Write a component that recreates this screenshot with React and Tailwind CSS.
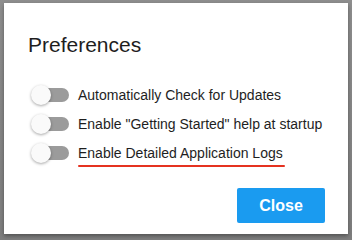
import React from "react";

function Toggle() {
  return (
    <div className="relative w-[40px] h-[20px] flex items-center shrink-0">
      <div className="ml-[6px] w-[32px] h-[14px] rounded-full bg-[#9b9b9b]" />
      <div className="absolute left-0 top-0 w-[20px] h-[20px] rounded-full bg-[#fafafa] shadow-[0_1px_3px_rgba(0,0,0,0.35)]" />
    </div>
  );
}

export default function App() {
  const rows = [
    "Automatically Check for Updates",
    'Enable "Getting Started" help at startup',
    "Enable Detailed Application Logs",
  ];
  return (
    <div className="w-[352px] h-[240px] bg-gradient-to-b from-[#8e8e8e] to-[#7e7e7e] pt-[3px] pl-[4px] font-['Liberation_Sans',Arial,sans-serif]">
      <div className="w-[344px] h-[231px] bg-white shadow-[0_2px_4px_rgba(0,0,0,0.35)] flex flex-col pl-[24px] pr-[23px]">
        <div className="mt-[30px] text-[21px] leading-[24px] text-[#1e1e1e]">Preferences</div>
        <div className="mt-[28px] flex flex-col gap-[9px] pl-[3px]">
          {rows.map((r, i) => (
            <div key={i} className="flex items-center gap-[7px] h-[20px]">
              <Toggle />
              <div className="relative text-[14px] leading-[20px] text-[#1e1e1e] whitespace-nowrap">
                {r}
                {i === 2 && (
                  <div className="absolute left-[0px] right-[-2px] bottom-[-4px] h-[2px] rounded-full bg-[#e53220]" />
                )}
              </div>
            </div>
          ))}
        </div>
        <div className="mt-[25px] flex justify-end">
          <button className="w-[88px] h-[35px] rounded-[2px] bg-[#1a9bf0] text-white font-bold text-[16px]">
            Close
          </button>
        </div>
      </div>
    </div>
  );
}
